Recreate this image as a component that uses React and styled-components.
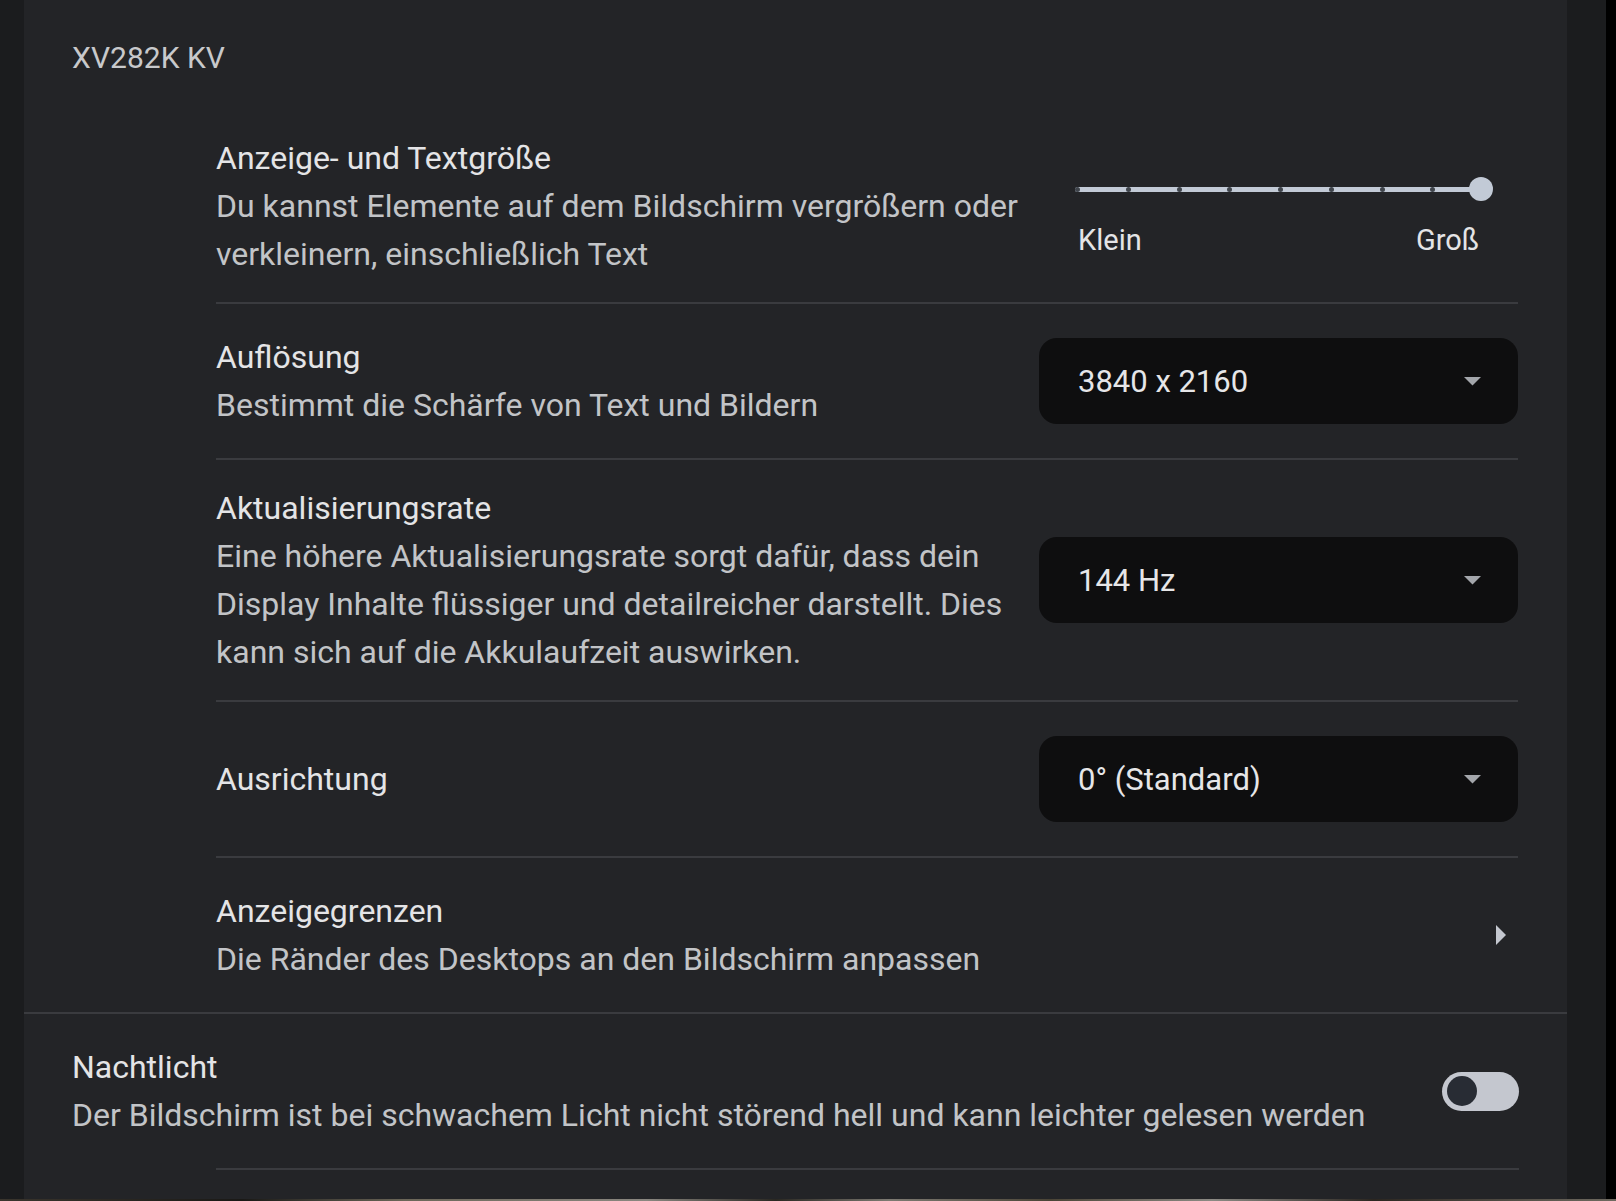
import React from "react";
import styled, { createGlobalStyle } from "styled-components";

const Global = createGlobalStyle`
  html, body { margin: 0; padding: 0; background: #000; }
  body { font-family: Roboto, "Noto Sans", "Liberation Sans", sans-serif; }
  * { box-sizing: border-box; }
`;

const Screen = styled.div`
  display: flex;
  width: 1616px;
  height: 1199px;
  background: #000;
`;

const SideStrip = styled.div`
  width: ${(p) => p.$w}px;
  flex-shrink: 0;
  background: ${(p) => p.$bg};
`;

const Panel = styled.div`
  flex: 1;
  background: #232427;
  display: flex;
  flex-direction: column;
`;

const Header = styled.div`
  padding: 34px 0 0 48px;
  font-size: 30px;
  line-height: 48px;
  color: #c8c9cb;
`;

const Group = styled.div`
  margin: 28px 49px 0 192px;
  display: flex;
  flex-direction: column;
`;

const Row = styled.div`
  display: flex;
  align-items: center;
  min-height: ${(p) => (p.$last ? 154 : 156)}px;
  padding: 24px 0;
  border-bottom: ${(p) => (p.$last ? "none" : "2px solid #3a3b3f")};
`;

const TextBlock = styled.div`
  flex: 1;
  min-width: 0;
  font-size: 32px;
  line-height: 48px;
`;

const Title = styled.div`
  color: #e4e4e6;
`;

const Desc = styled.div`
  color: #c2c4c7;
`;

const Control = styled.div`
  width: 479px;
  flex-shrink: 0;
  align-self: ${(p) => (p.$top ? "flex-start" : "center")};
`;

const SliderWrap = styled.div`
  margin: 43px 0 0 36px;
  width: 418px;
`;

const Track = styled.div`
  position: relative;
  height: 24px;
`;

const TrackLine = styled.div`
  position: absolute;
  left: 0;
  right: 12px;
  top: 10px;
  height: 5px;
  border-radius: 3px;
  background: #c2cad6;
`;

const Tick = styled.span`
  position: absolute;
  top: 10px;
  width: 5px;
  height: 5px;
  border-radius: 50%;
  background: #3f444b;
`;

const Thumb = styled.span`
  position: absolute;
  right: 0;
  top: 0;
  width: 24px;
  height: 24px;
  border-radius: 50%;
  background: #c2cad6;
`;

const SliderLabels = styled.div`
  display: flex;
  justify-content: space-between;
  margin-top: 15px;
  padding: 0 14px 0 3px;
  font-size: 29px;
  line-height: 48px;
  color: #e4e4e6;
`;

const Select = styled.div`
  display: flex;
  align-items: center;
  justify-content: space-between;
  height: 86px;
  border-radius: 18px;
  background: #0e0e0f;
  padding: 0 37px 0 39px;
  font-size: 31px;
  color: #e6e6e8;
`;

const Chevron = styled.div`
  display: flex;
  align-items: center;
  margin-right: 12px;
`;

const FullDivider = styled.div`
  height: 2px;
  background: #3a3b3f;
`;

const NightRow = styled.div`
  display: flex;
  align-items: center;
  height: 154px;
  padding: 0 48px;
`;

const InsetDivider = styled.div`
  height: 2px;
  margin: 0 48px 0 192px;
  background: #3a3b3f;
`;

const Toggle = styled.div`
  width: 77px;
  height: 39px;
  border-radius: 20px;
  background: #c4c7cf;
  display: flex;
  align-items: center;
  padding-left: 5px;
  flex-shrink: 0;
`;

const Knob = styled.span`
  width: 30px;
  height: 30px;
  border-radius: 50%;
  background: #282c34;
`;

const Wallpaper = styled.div`
  height: 2px;
  width: 1616px;
  background: linear-gradient(
    90deg,
    #3a352d 0%,
    #1a1916 15%,
    #6b6658 25%,
    #8a8780 40%,
    #2a2822 48%,
    #7d7a72 55%,
    #4a4436 65%,
    #8c8a84 75%,
    #2b2620 85%,
    #6f6a60 100%
  );
`;

const DownArrow = () => (
  <svg width="17" height="9" viewBox="0 0 17 9">
    <path d="M0 0 L17 0 L8.5 8.5 Z" fill="#a3a6ab" />
  </svg>
);

const RightArrow = () => (
  <svg width="10" height="20" viewBox="0 0 10 20">
    <path d="M0 0 L10 10 L0 20 Z" fill="#c4c7cf" />
  </svg>
);

const Slider = () => {
  const stops = 9;
  const span = 406;
  return (
    <SliderWrap>
      <Track>
        <TrackLine />
        {Array.from({ length: stops - 1 }).map((_, i) => (
          <Tick key={i} style={{ left: `${(span / (stops - 1)) * i}px` }} />
        ))}
        <Thumb />
      </Track>
      <SliderLabels>
        <span>Klein</span>
        <span>Groß</span>
      </SliderLabels>
    </SliderWrap>
  );
};

const Dropdown = ({ value }) => (
  <Select>
    <span>{value}</span>
    <DownArrow />
  </Select>
);

export default function App() {
  return (
    <>
      <Global />
      <Screen>
        <SideStrip $w={24} $bg="#1b1c1e" />
        <Panel>
          <Header>XV282K KV</Header>
          <Group>
            <Row>
              <TextBlock>
                <Title>Anzeige- und Textgröße</Title>
                <Desc>
                  Du kannst Elemente auf dem Bildschirm vergrößern oder
                  <br />
                  verkleinern, einschließlich Text
                </Desc>
              </TextBlock>
              <Control $top>
                <Slider />
              </Control>
            </Row>
            <Row>
              <TextBlock>
                <Title>Auflösung</Title>
                <Desc>Bestimmt die Schärfe von Text und Bildern</Desc>
              </TextBlock>
              <Control>
                <Dropdown value="3840 x 2160" />
              </Control>
            </Row>
            <Row>
              <TextBlock>
                <Title>Aktualisierungsrate</Title>
                <Desc>
                  Eine höhere Aktualisierungsrate sorgt dafür, dass dein
                  <br />
                  Display Inhalte flüssiger und detailreicher darstellt. Dies
                  <br />
                  kann sich auf die Akkulaufzeit auswirken.
                </Desc>
              </TextBlock>
              <Control>
                <Dropdown value="144 Hz" />
              </Control>
            </Row>
            <Row>
              <TextBlock>
                <Title>Ausrichtung</Title>
              </TextBlock>
              <Control>
                <Dropdown value="0° (Standard)" />
              </Control>
            </Row>
            <Row $last>
              <TextBlock>
                <Title>Anzeigegrenzen</Title>
                <Desc>Die Ränder des Desktops an den Bildschirm anpassen</Desc>
              </TextBlock>
              <Chevron>
                <RightArrow />
              </Chevron>
            </Row>
          </Group>
          <FullDivider />
          <NightRow>
            <TextBlock>
              <Title>Nachtlicht</Title>
              <Desc>
                Der Bildschirm ist bei schwachem Licht nicht störend hell und
                kann leichter gelesen werden
              </Desc>
            </TextBlock>
            <Toggle>
              <Knob />
            </Toggle>
          </NightRow>
          <InsetDivider />
        </Panel>
        <SideStrip $w={39} $bg="#1b1c1e" />
        <SideStrip $w={10} $bg="#000" />
      </Screen>
      <Wallpaper />
    </>
  );
}
